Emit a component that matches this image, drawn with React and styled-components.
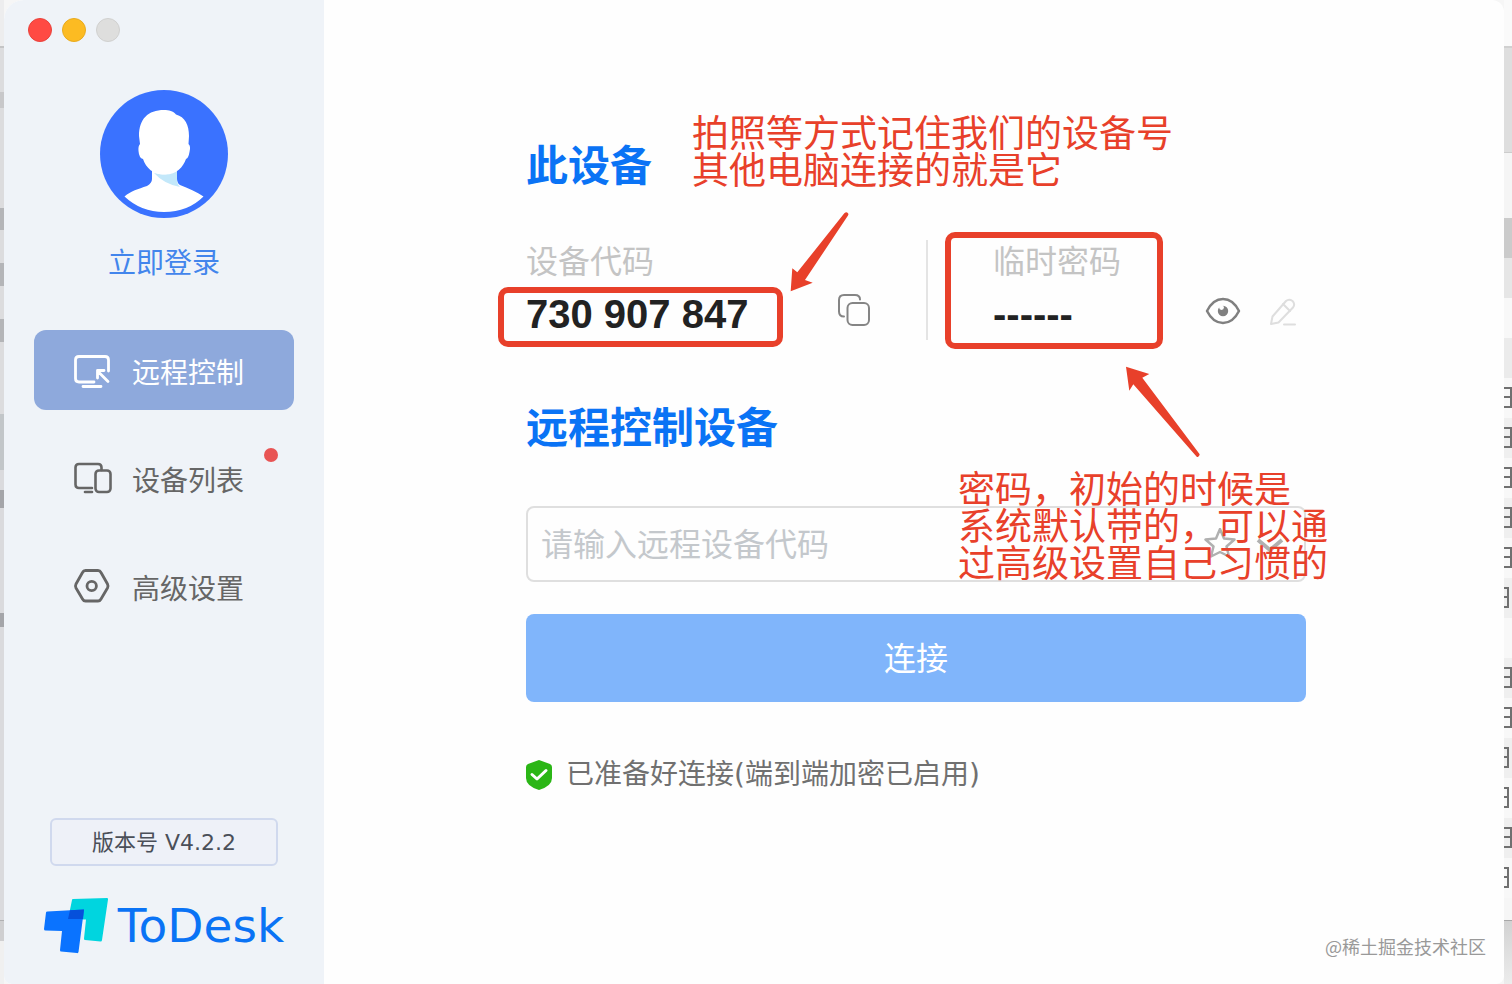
import React from "react";
import styled, { createGlobalStyle } from "styled-components";

const GlobalStyle = createGlobalStyle`
  * { box-sizing: border-box; }
  body {
    margin: 0;
    font-family: "Noto Sans CJK SC", "Noto Sans", sans-serif;
    color: #666;
  }
  h2, p { margin: 0; }
  button, input { font: inherit; }
`;

const ACCENT = "#0a73f5";
const NOTE = "#e8402a";

const Desktop = styled.div`
  display: grid;
  grid-template-columns: 4px minmax(0, 1fr) 8px;
  min-height: 100vh;
  overflow: hidden;
  background: #f6f6f6;
`;

const LeftEdge = styled.div`
  background: linear-gradient(
    #ededee 0 46px, #c4c4c5 46px 48px, #dcdcde 48px 92px, #c8c8ca 92px 108px,
    #dcdcde 108px 208px, #b4b5b8 208px 230px, #dcdcde 230px 263px,
    #b4b5b8 263px 286px, #dcdcde 286px 319px, #b4b5b8 319px 342px,
    #dcdcde 342px 414px, #c2c6c9 414px 470px, #dadadd 470px 490px,
    #a4a5a9 490px 508px, #dadadd 508px 613px, #a4a5a9 613px 627px,
    #dadadd 627px 920px, #b0b0b2 920px 921px, #cfcfd1 921px 941px,
    #f0f0f0 941px
  );
`;

const RightEdge = styled.div`
  overflow: hidden;
  padding-top: 378px;
  background: linear-gradient(
    #fafafa 0 46px, #d0d0d0 46px 48px, #dedede 48px 152px, #cccccc 152px 153px,
    #f5f5f5 153px 218px, #cbcbcb 218px 258px, #e6e6e6 258px 298px,
    #f8f8f8 298px 338px, #ebebeb 338px 378px, #f6f6f6 378px 920px,
    #a8a8a8 920px 921px, #d2d2d2 921px, #ececec 984px
  );
`;

const EdgeRow = styled.div`
  height: 40px;
  padding-top: 9px;
  background: ${(p) => (p.$shaded ? "#efefef" : "#f8f8f8")};
`;

const EdgeMark = styled.div`
  width: ${(p) => p.$width};
  height: 21px;
  border: solid #707070;
  border-width: 2px 2px 2px 0;
  background: linear-gradient(transparent 0 7px, #707070 7px 9px, transparent 9px);
`;

const Window = styled.div`
  display: grid;
  grid-template-columns: 320px minmax(0, 1fr);
  border-radius: 20px 12px 8px 8px;
  overflow: hidden;
  background: #fefefe;
`;

const Sidebar = styled.aside`
  display: flex;
  flex-direction: column;
  align-items: center;
  padding: 18px 30px 29px;
  background: #eff3f8;
`;

const Lights = styled.div`
  display: flex;
  align-self: stretch;
  gap: 10px;
  margin: 0 -6px 48px;
`;

const Light = styled.button`
  width: 24px;
  height: 24px;
  padding: 0;
  border: 1px solid ${(p) => p.$edge};
  border-radius: 50%;
  background: ${(p) => p.$fill};
`;

const Login = styled.a`
  margin: 23px 0 49px;
  font-size: 28px;
  line-height: 40px;
  color: #4285ec;
  text-decoration: none;
`;

const Nav = styled.nav`
  display: flex;
  flex-direction: column;
  align-self: stretch;
  gap: 28px;
`;

const NavItem = styled.a`
  position: relative;
  display: flex;
  align-items: center;
  gap: 20px;
  height: 80px;
  padding: 2px 36px 0 38px;
  border-radius: 12px;
  font-size: 28px;
  line-height: 40px;
  text-decoration: none;
  color: ${(p) => (p.$active ? "#fff" : "#666")};
  background: ${(p) => (p.$active ? "#8ea9dc" : "transparent")};
`;

const Badge = styled.span`
  position: absolute;
  top: 10px;
  right: 16px;
  width: 14px;
  height: 14px;
  border-radius: 50%;
  background: #e85454;
`;

const Version = styled.button`
  width: 228px;
  height: 48px;
  margin: auto 0 31px;
  padding: 0 0 5px;
  border: 2px solid #d0d9ee;
  border-radius: 6px;
  background: #eef1f8;
  font-family: "DejaVu Sans", "Noto Sans CJK SC", sans-serif;
  font-size: 22px;
  color: #4a4f58;
`;

const Brand = styled.div`
  display: flex;
  align-items: center;
  gap: 10px;
  height: 58px;
  font-family: "DejaVu Sans", sans-serif;
  font-size: 47px;
  line-height: 58px;
  color: ${ACCENT};
`;

const Main = styled.main`
  display: flex;
  flex-direction: column;
  justify-content: space-between;
  padding: 133px 198px 0 202px;
`;

const Content = styled.div`
  position: relative;
`;

const Title = styled.h2`
  font-size: 42px;
  font-weight: 600;
  line-height: 60px;
  color: ${ACCENT};
`;

const DeviceRow = styled.div`
  display: flex;
  height: 100px;
  margin: 47px 0 55px;
`;

const Field = styled.div`
  position: relative;
  display: flex;
  flex-direction: column;
  gap: 11px;
  width: ${(p) => p.$width};
`;

const FieldLabel = styled.span`
  font-size: 32px;
  line-height: 38px;
  color: #c4c4c4;
`;

const FieldValue = styled.span`
  font-family: "Liberation Sans", sans-serif;
  font-size: 40px;
  font-weight: 700;
  line-height: 50px;
  color: #222;
`;

const Divider = styled.div`
  width: 2px;
  margin: 0 65px 0 56px;
  background: #e4e4e4;
`;

const IconButton = styled.button`
  display: flex;
  align-self: ${(p) => (p.$low ? "flex-end" : "center")};
  margin: 0 0 ${(p) => (p.$low ? "14px" : "0")} 0;
  padding: 0;
  border: 0;
  background: none;
`;

const Tools = styled.div`
  display: flex;
  gap: 28px;
`;

const InputBox = styled.div`
  display: flex;
  align-items: center;
  gap: 20px;
  height: 76px;
  margin: 51px 0 32px;
  padding: 0 20px 0 13px;
  border: 2px solid #dfdfdf;
  border-radius: 8px;
`;

const CodeInput = styled.input`
  flex: 1;
  min-width: 0;
  padding: 0 0 4px;
  border: 0;
  outline: 0;
  background: none;
  font-size: 32px;
  line-height: 44px;
  color: #222;
  &::placeholder { color: #c4c8cc; opacity: 1; }
`;

const Connect = styled.button`
  display: block;
  width: 100%;
  height: 88px;
  padding: 0 0 4px;
  border: 0;
  border-radius: 8px;
  background: #80b5fb;
  font-size: 32px;
  color: #fff;
`;

const Status = styled.p`
  display: flex;
  align-items: center;
  gap: 14px;
  margin-top: 53px;
  font-family: "DejaVu Sans", "Noto Sans CJK SC", sans-serif;
  font-size: 28px;
  line-height: 40px;
  color: #707070;
`;

const Watermark = styled.p`
  align-self: flex-end;
  margin: 0 -180px 25px 0;
  font-size: 18px;
  line-height: 26px;
  color: #999;
`;

const Frame = styled.span`
  position: absolute;
  top: ${(p) => p.$top};
  left: ${(p) => p.$left};
  width: ${(p) => p.$width};
  height: ${(p) => p.$height};
  border: 6px solid ${NOTE};
  border-radius: 10px;
  pointer-events: none;
`;

const Note = styled.p`
  position: absolute;
  top: ${(p) => p.$top};
  left: ${(p) => p.$left};
  font-size: 37px;
  line-height: 37px;
  white-space: nowrap;
  color: ${NOTE};
  pointer-events: none;
`;

const Arrow = styled.svg`
  position: absolute;
  top: ${(p) => p.$top};
  left: ${(p) => p.$left};
  fill: ${NOTE};
  pointer-events: none;
`;

const Avatar = () => (
  <svg width="128" height="128" viewBox="0 0 128 128" role="img" aria-label="头像">
    <circle cx="64" cy="64" r="64" fill="#3a72ff" />
    <path
      d="M52 80V89Q52 93 47 96C38 99 31 101 24.500 106.500Q41 122 64 122Q88 122 103.500 106.500C97 102 88 98 80 95Q77 93 77 89V80Z"
      fill="#fff"
    />
    <path d="M54 83Q66 87 77 80V89Q77 94 80 97Q64 94 54 83Z" fill="#c3e8fa" />
    <path
      d="M64 20C69 20 73 21 76 24.500C85 27 89 35 89 46L88.500 54Q91 56 89.500 62Q88.500 68 86 69C83 77 77 84.500 65 84.500C53 84.500 46 78 43 69Q39 68 38.500 61Q38 56 40 54L39 46C39 29 48 20 64 20Z"
      fill="#fff"
    />
  </svg>
);

const RemoteIcon = () => (
  <svg width="40" height="40" viewBox="0 0 40 40" fill="none" stroke="currentColor" strokeWidth="2.800" strokeLinecap="round" strokeLinejoin="round">
    <path d="M22 31H7Q3.500 31 3.500 27.500V9Q3.500 5.500 7 5.500H33Q36.500 5.500 36.500 9V20" />
    <path d="M11 35.500H29M36 30.500L25.500 20M25.500 27V19.500H32" />
  </svg>
);

const DevicesIcon = () => (
  <svg width="40" height="40" viewBox="0 0 40 40" fill="none" stroke="currentColor" strokeWidth="2.600" strokeLinecap="round" strokeLinejoin="round">
    <path d="M20 29H7Q3.500 29 3.500 25.500V8.500Q3.500 5 7 5H26Q29.500 5 29.500 8.500V11" />
    <rect x="23.500" y="11.500" width="15" height="21.500" rx="3.500" />
    <path d="M13 33H20" />
  </svg>
);

const SettingsIcon = () => (
  <svg width="40" height="40" viewBox="0 0 40 40" fill="none" stroke="currentColor" strokeWidth="2.800" strokeLinejoin="round">
    <path d="M13.500 3.500H26Q28 3.500 29 5.500L35.500 17Q36.500 19 35.500 21L29 32Q28 34 26 34H13.500Q11.500 34 10.500 32L4 21Q3 19 4 17L10.500 5.500Q11.500 3.500 13.500 3.500Z" />
    <circle cx="19.700" cy="19" r="4.700" />
  </svg>
);

const BrandMark = () => (
  <svg width="64" height="56" viewBox="0 0 64 56">
    <path d="M28 2Q28 1 29 1L63 0Q64.500 0 64 1.500L58 42Q58 43.500 56.500 43.500L41 42Q40 42 40 40.500L42 21.500H24Z" fill="#00d5df" />
    <path d="M2 14.500Q2 13.500 3.500 13.500L40 11.500L34.500 54Q34 55.500 33 55L17 53.500Q16 53.500 16 52L18 33L1.500 32.500Q0 32.500 0 31Z" fill="#0a73ff" />
    <path d="M26 12.200L40 11.500L39 21H24Z" fill="#0650db" />
  </svg>
);

const CopyIcon = () => (
  <svg width="32" height="32" viewBox="0 0 32 32" fill="none" stroke="#858585" strokeWidth="2" strokeLinecap="round">
    <path d="M6 22.500Q1 22.500 1 17.500V6Q1 1 6 1H17Q22 1 22 5.500" />
    <rect x="9.500" y="9" width="21.500" height="22" rx="5" />
  </svg>
);

const EyeIcon = () => (
  <svg width="36" height="30" viewBox="0 0 36 30" fill="none">
    <path d="M2 15Q8 3 18 3Q28 3 34 15Q28 27 18 27Q8 27 2 15Z" stroke="#808080" strokeWidth="2.500" strokeLinejoin="round" />
    <circle cx="18" cy="15" r="5.200" fill="#808080" />
    <circle cx="16.500" cy="11.500" r="2.400" fill="#fefefe" />
  </svg>
);

const PencilIcon = () => (
  <svg width="28" height="28" viewBox="0 0 28 28" fill="none" stroke="#dedede" strokeWidth="2" strokeLinecap="round" strokeLinejoin="round">
    <path d="M2 26L3.500 18.500L17 3Q20 0.500 23.500 3Q26.500 6 24 9.500L9.500 24.500Z" />
    <path d="M14 6L21 13M15 26.500H26" />
  </svg>
);

const StarIcon = () => (
  <svg width="32" height="32" viewBox="0 0 32 32" fill="none" stroke="#b0b0b0" strokeWidth="2.500" strokeLinejoin="round">
    <path d="M16 1L20 10.500L30.500 11.500L22.500 18.500L25 28.500L16 24L7 28.500L9.500 18.500L1.500 11.500L12 10.500Z" />
  </svg>
);

const ChevronIcon = () => (
  <svg width="28" height="16" viewBox="0 0 28 16" fill="none" stroke="#b0b0b0" strokeWidth="4">
    <path d="M2 4L14 14L26 4" />
  </svg>
);

const ShieldIcon = () => (
  <svg width="26" height="30" viewBox="0 0 26 30">
    <path d="M13 0L24 4Q26 5 26 7V18Q26 26 13 30Q0 26 0 18V7Q0 5 2 4Z" fill="#2bb616" />
    <path d="M6 14.500L11 19L20 10.500" fill="none" stroke="#fff" strokeWidth="3" strokeLinecap="round" strokeLinejoin="round" />
  </svg>
);

const NAV = [
  { label: "远程控制", Icon: RemoteIcon, active: true },
  { label: "设备列表", Icon: DevicesIcon, badge: true },
  { label: "高级设置", Icon: SettingsIcon },
];

const EDGE = [8, 8, 8, 8, 8, 5, 0, 8, 8, 5, 5, 8, 5];

export default function App() {
  return (
    <Desktop>
      <GlobalStyle />
      <LeftEdge />
      <Window>
        <Sidebar>
          <Lights>
            <Light aria-label="关闭" $fill="#ff4a43" $edge="#e8423c" />
            <Light aria-label="最小化" $fill="#fcbb22" $edge="#e8aa1e" />
            <Light aria-label="缩放" $fill="#dededd" $edge="#d0d0cf" />
          </Lights>
          <Avatar />
          <Login href="#login">立即登录</Login>
          <Nav>
            {NAV.map(({ label, Icon, active, badge }) => (
              <NavItem key={label} href="#nav" $active={active}>
                <Icon />
                {label}
                {badge && <Badge />}
              </NavItem>
            ))}
          </Nav>
          <Version>版本号 V4.2.2</Version>
          <Brand>
            <BrandMark />
            ToDesk
          </Brand>
        </Sidebar>
        <Main>
          <Content>
            <Title>此设备</Title>
            <DeviceRow>
              <Field $width="312px">
                <FieldLabel>设备代码</FieldLabel>
                <FieldValue>730 907 847</FieldValue>
                <Frame $top="47px" $left="-28px" $width="285px" $height="60px" />
              </Field>
              <IconButton $low aria-label="复制">
                <CopyIcon />
              </IconButton>
              <Divider />
              <Field $width="212px">
                <FieldLabel>临时密码</FieldLabel>
                <FieldValue>------</FieldValue>
                <Frame $top="-8px" $left="-48px" $width="218px" $height="117px" />
              </Field>
              <Tools>
                <IconButton $low aria-label="显示密码">
                  <EyeIcon />
                </IconButton>
                <IconButton $low aria-label="修改密码">
                  <PencilIcon />
                </IconButton>
              </Tools>
            </DeviceRow>
            <Title>远程控制设备</Title>
            <InputBox>
              <CodeInput aria-label="远程设备代码" placeholder="请输入远程设备代码" />
              <IconButton aria-label="收藏">
                <StarIcon />
              </IconButton>
              <IconButton aria-label="展开">
                <ChevronIcon />
              </IconButton>
            </InputBox>
            <Connect>连接</Connect>
            <Status>
              <ShieldIcon />
              已准备好连接(端到端加密已启用)
            </Status>
            <Note $top="-20px" $left="166px">
              拍照等方式记住我们的设备号
              <br />
              其他电脑连接的就是它
            </Note>
            <Arrow $top="79px" $left="264px" width="60" height="80" viewBox="0 0 60 80">
              <path d="M0.700 79.300L2.300 56.300L7.300 60.300L54.300 1.300Q57 -1 58.500 2L58 3.500L15 68L22.700 70.700Z" />
            </Arrow>
            <Arrow $top="233px" $left="600px" width="74" height="92" viewBox="0 0 74 92">
              <path d="M0 0.700L23.300 8L16.300 11.700L73.700 88.300Q73 92 70.700 90.700L7.300 18.300L3.300 24.700Z" />
            </Arrow>
            <Note $top="336px" $left="432px">
              密码，初始的时候是
              <br />
              系统默认带的，可以通
              <br />
              过高级设置自己习惯的
            </Note>
          </Content>
          <Watermark>@稀土掘金技术社区</Watermark>
        </Main>
      </Window>
      <RightEdge>
        {EDGE.map((width, i) => (
          <EdgeRow key={i} $shaded={i % 2 === 1}>
            {width > 0 && <EdgeMark $width={`${width}px`} />}
          </EdgeRow>
        ))}
      </RightEdge>
    </Desktop>
  );
}
